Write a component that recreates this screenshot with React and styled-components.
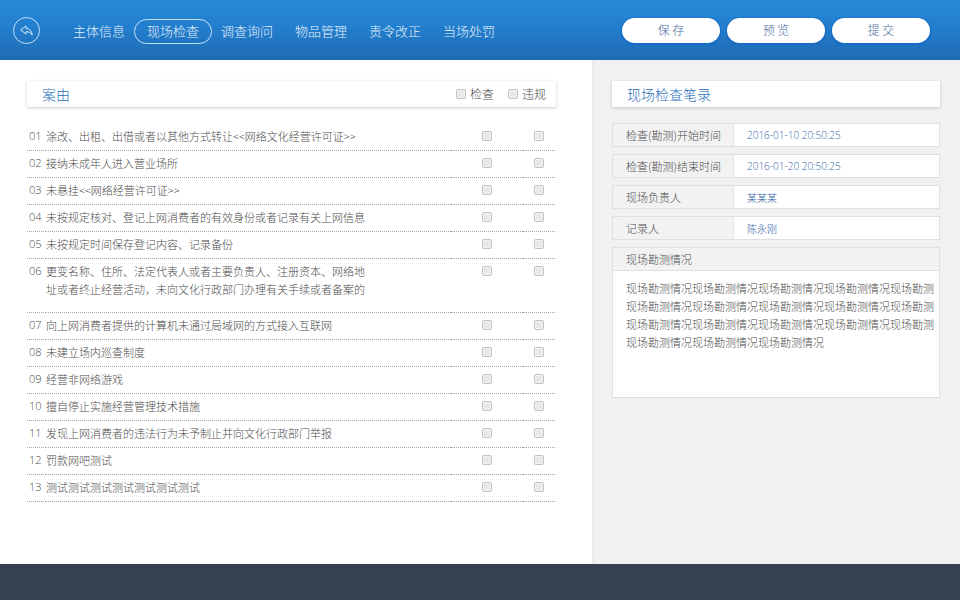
import React, { useState } from 'react';
import styled, { createGlobalStyle } from 'styled-components';

const GlobalStyle = createGlobalStyle`
  * {
    box-sizing: border-box;
  }

  body {
    margin: 0;
    background: #ffffff;
  }

  body, button, input, textarea {
    font-family: "Noto Sans CJK SC", "Noto Sans", sans-serif;
    font-weight: 300;
  }
`;

const Page = styled.div`
  min-height: 100vh;
  display: flex;
  flex-direction: column;
  color: #4c4c4c;
`;

// Top bar
const TopBar = styled.header`
  height: 60px;
  display: flex;
  align-items: center;
  padding: 0 30px 0 13px;
  background: linear-gradient(#2888d8, #2380d0 40%, #1f6bb2);
`;

const BackButton = styled.button`
  width: 27px;
  height: 27px;
  display: flex;
  align-items: center;
  justify-content: center;
  padding: 0;
  border: 1px solid #c5e0f7;
  border-radius: 50%;
  background: transparent;
  color: #d8eafa;
  cursor: pointer;
`;

const Nav = styled.nav`
  flex: 1;
  display: flex;
  padding-top: 3px;
  margin-left: 22px;
`;

const NavLink = styled.a`
  height: 25px;
  line-height: 22px;
  padding: 0 ${(props) => (props.$active ? '12px' : '10px')};
  margin: 0 ${(props) => (props.$active ? '-2px' : '0')};
  border: 1px solid ${(props) => (props.$active ? '#c5e0f7' : 'transparent')};
  border-radius: 13px;
  font-size: 13px;
  color: #e4f0fb;
  text-decoration: none;
  white-space: nowrap;
`;

const Actions = styled.div`
  display: flex;
  gap: 7px;
`;

const ActionButton = styled.button`
  width: 98px;
  height: 25px;
  padding: 0;
  border: none;
  border-radius: 13px;
  background: #ffffff;
  box-shadow: 0 1px 2px 1px #176bc6;
  font-size: 12px;
  line-height: 24px;
  color: #45699b;
  cursor: pointer;
`;

// Panels
const Content = styled.main`
  flex: 1;
  display: grid;
  grid-template-columns: minmax(0, 1fr) 368px;
`;

const CausePanel = styled.section`
  padding: 21px 36px 20px 27px;
`;

const RecordPanel = styled.section`
  padding: 21px 20px 20px 18px;
  border-left: 2px solid #ebebeb;
  background: #f1f1f1;
`;

const TitleBar = styled.div`
  height: 26px;
  display: flex;
  align-items: center;
  padding: 0 10px 0 15px;
  background: #ffffff;
  box-shadow: 0 1px 3px rgba(0, 0, 0, 0.2);
`;

const Title = styled.h2`
  flex: 1;
  margin: 0;
  font-size: 14px;
  line-height: 26px;
  font-weight: 300;
  color: #2a6ebb;
`;

const Checkbox = styled.input.attrs({ type: 'checkbox' })`
  appearance: none;
  width: 10px;
  height: 10px;
  display: block;
  margin: 0;
  border: 1px solid #c2c2c2;
  border-radius: 2px;
  background: #e8e8e8;
  box-shadow: inset 0 0 0 1px #f3f3f3;
  cursor: pointer;

  &:checked {
    background: #2a7fce;
  }
`;

const CheckAll = styled.label`
  display: flex;
  align-items: center;
  gap: 4px;
  margin-left: 14px;
  font-size: 12px;
  line-height: 26px;
`;

// Cause list
const CauseTable = styled.table`
  width: calc(100% - 1px);
  margin-top: 17px;
  border-collapse: collapse;
  table-layout: fixed;
  font-size: 11px;
  line-height: 18px;

  tr {
    border-bottom: 1px dotted #a6a6a6;
  }
`;

const Cell = styled.td`
  width: ${(props) => props.$width || 'auto'};
  padding: 3px 0 ${(props) => (props.$tall ? '14px' : '5px')};
  vertical-align: top;
`;

const NumberCell = styled(Cell)`
  padding-left: 2px;
  font-family: "Open Sans", "Noto Sans", sans-serif;
`;

const CheckCell = styled(Cell)`
  padding-top: 7px;

  input {
    margin: 0 auto;
  }
`;

const CauseLine = styled.span`
  display: block;
`;

// Record form
const Form = styled.form`
  display: flex;
  flex-direction: column;
  gap: 7px;
  margin-top: 16px;
`;

const Field = styled.div`
  height: 24px;
  display: flex;
  border: 1px solid #dfdfdf;
  background: #ffffff;
`;

const FieldLabel = styled.label`
  width: 121px;
  padding-left: 13px;
  border-right: 1px solid #e3e3e3;
  background: #f2f2f2;
  font-size: 11px;
  line-height: 22px;
`;

const FieldInput = styled.input`
  flex: 1;
  min-width: 0;
  padding: 0 13px;
  border: none;
  outline: none;
  background: transparent;
  font-family: "Open Sans", "Noto Sans CJK SC", sans-serif;
  font-size: 10px;
  color: #3565a8;
`;

const NoteBox = styled.div`
  border: 1px solid #dfdfdf;
  background: #ffffff;
`;

const NoteLabel = styled.label`
  display: block;
  padding-left: 13px;
  border-bottom: 1px solid #dfdfdf;
  background: #f2f2f2;
  font-size: 11px;
  line-height: 22px;
`;

const NoteText = styled.textarea`
  width: 100%;
  height: 126px;
  display: block;
  padding: 8px 4px 8px 13px;
  border: none;
  outline: none;
  resize: none;
  background: transparent;
  font-size: 11px;
  line-height: 18px;
  color: #4c4c4c;
`;

const Footer = styled.footer`
  height: 36px;
  background: #36424f;
`;

const navItems = ['主体信息', '现场检查', '调查询问', '物品管理', '责令改正', '当场处罚'];

const causes = [
  ['涂改、出租、出借或者以其他方式转让<<网络文化经营许可证>>'],
  ['接纳未成年人进入营业场所'],
  ['未悬挂<<网络经营许可证>>'],
  ['未按规定核对、登记上网消费者的有效身份或者记录有关上网信息'],
  ['未按规定时间保存登记内容、记录备份'],
  [
    '更变名称、住所、法定代表人或者主要负责人、注册资本、网络地',
    '址或者终止经营活动，未向文化行政部门办理有关手续或者备案的',
  ],
  ['向上网消费者提供的计算机未通过局域网的方式接入互联网'],
  ['未建立场内巡查制度'],
  ['经营非网络游戏'],
  ['擅自停止实施经营管理技术措施'],
  ['发现上网消费者的违法行为未予制止并向文化行政部门举报'],
  ['罚款网吧测试'],
  ['测试测试测试测试测试测试测试'],
];

const fields = [
  { id: 'start', label: '检查(勘测)开始时间', value: '2016-01-10 20:50:25' },
  { id: 'end', label: '检查(勘测)结束时间', value: '2016-01-20 20:50:25' },
  { id: 'leader', label: '现场负责人', value: '某某某' },
  { id: 'recorder', label: '记录人', value: '陈永刚' },
];

const CauseRow = ({ number, lines }) => {
  const tall = lines.length > 1;
  return (
    <tr>
      <NumberCell $width="19px" $tall={tall}>{number}</NumberCell>
      <Cell $tall={tall}>
        {lines.map((line) => (
          <CauseLine key={line}>{line}</CauseLine>
        ))}
      </Cell>
      <CheckCell $width="72px" $tall={tall}>
        <Checkbox aria-label={`${number} 检查`} />
      </CheckCell>
      <CheckCell $width="32px" $tall={tall}>
        <Checkbox aria-label={`${number} 违规`} />
      </CheckCell>
    </tr>
  );
};

const App = () => {
  const [active, setActive] = useState('现场检查');

  return (
    <Page>
      <GlobalStyle />
      <TopBar>
        <BackButton type="button" aria-label="返回">
          <svg width="13" height="11" viewBox="0 0 13 11" fill="none" stroke="currentColor" strokeWidth="1" strokeLinejoin="round">
            <path d="M0.7 5 L6 1 V3.3 C9.6 3.6 12 6 12.2 10 C10.8 7.7 9 6.7 6 6.7 V9 Z" />
          </svg>
        </BackButton>
        <Nav>
          {navItems.map((item) => (
            <NavLink key={item} href="#" $active={item === active} onClick={() => setActive(item)}>
              {item}
            </NavLink>
          ))}
        </Nav>
        <Actions>
          <ActionButton type="button">保 存</ActionButton>
          <ActionButton type="button">预 览</ActionButton>
          <ActionButton type="button">提 交</ActionButton>
        </Actions>
      </TopBar>

      <Content>
        <CausePanel>
          <TitleBar>
            <Title>案由</Title>
            <CheckAll><Checkbox />检查</CheckAll>
            <CheckAll><Checkbox />违规</CheckAll>
          </TitleBar>
          <CauseTable>
            <tbody>
              {causes.map((lines, i) => (
                <CauseRow key={i} number={String(i + 1).padStart(2, '0')} lines={lines} />
              ))}
            </tbody>
          </CauseTable>
        </CausePanel>

        <RecordPanel>
          <TitleBar>
            <Title>现场检查笔录</Title>
          </TitleBar>
          <Form>
            {fields.map((field) => (
              <Field key={field.id}>
                <FieldLabel htmlFor={field.id}>{field.label}</FieldLabel>
                <FieldInput id={field.id} type="text" defaultValue={field.value} />
              </Field>
            ))}
            <NoteBox>
              <NoteLabel htmlFor="note">现场勘测情况</NoteLabel>
              <NoteText id="note" defaultValue={'现场勘测情况现场勘测情况现场勘测情况现场勘测情况现场勘测\n'.repeat(3) + '现场勘测情况'.repeat(3)} />
            </NoteBox>
          </Form>
        </RecordPanel>
      </Content>
      <Footer />
    </Page>
  );
};

export default App;
